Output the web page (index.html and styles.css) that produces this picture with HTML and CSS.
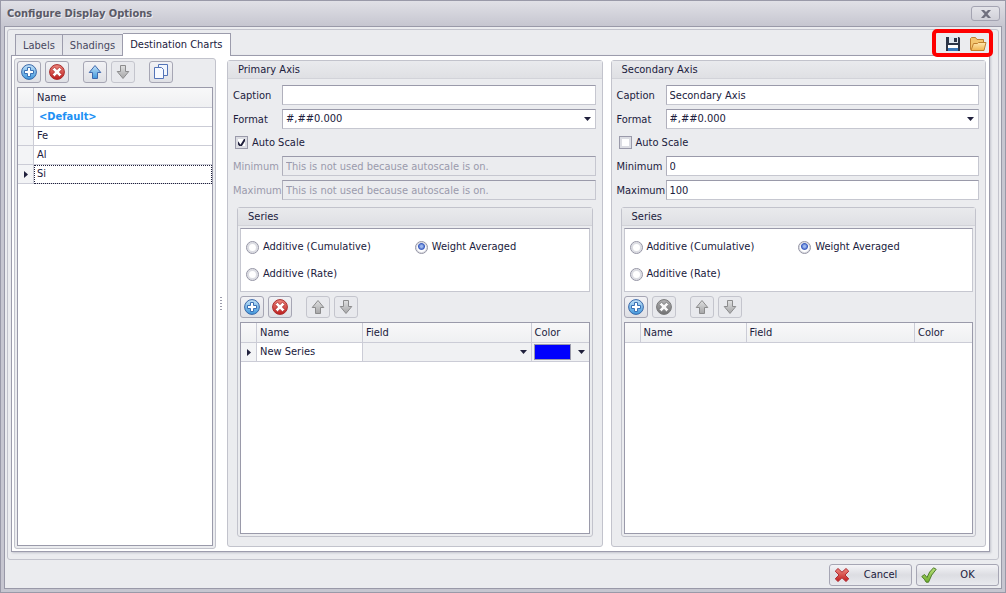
FILE: index.html
```
<!DOCTYPE html>
<html lang="en">
<head>
  <meta charset="UTF-8">
  <title>Configure Display Options</title>
  <link rel="stylesheet" href="styles.css">
</head>
<body>
  <!-- Shared icons -->
  <svg class="sprite" aria-hidden="true">
    <defs>
      <linearGradient id="blueFill" x1="0" y1="0" x2="0" y2="1">
        <stop offset="0" stop-color="#c4e2f8"/>
        <stop offset="1" stop-color="#3f97dc"/>
      </linearGradient>
      <linearGradient id="redFill" x1="0" y1="0" x2="0" y2="1">
        <stop offset="0" stop-color="#ee8a80"/>
        <stop offset="1" stop-color="#c01c1c"/>
      </linearGradient>
      <linearGradient id="greenFill" x1="0" y1="0" x2="0" y2="1">
        <stop offset="0" stop-color="#b9e07a"/>
        <stop offset="1" stop-color="#6fae2c"/>
      </linearGradient>
      <linearGradient id="folderFill" x1="0" y1="0" x2="0" y2="1">
        <stop offset="0" stop-color="#ffe9b0"/>
        <stop offset="1" stop-color="#f0b450"/>
      </linearGradient>
    </defs>
    <symbol id="iconAdd" viewBox="0 0 16 16">
      <circle cx="8" cy="8" r="7.4" fill="url(#blueFill)" stroke="#3a68a8"/>
      <path d="M6.500 3.500h3v3h3v3h-3v3h-3v-3h-3v-3h3z" fill="#fff" stroke="#3a70b4"/>
    </symbol>
    <symbol id="iconRemove" viewBox="0 0 16 16">
      <circle cx="8" cy="8" r="7.4" fill="url(#redFill)" stroke="#a82c2c"/>
      <path d="M5.500 3.200L8 5.600l2.500-2.400 2.300 2.300L10.400 8l2.400 2.500-2.300 2.300L8 10.400l-2.500 2.400-2.300-2.300L5.600 8 3.200 5.500z" fill="#fff" stroke="#a82424" stroke-width=".8"/>
    </symbol>
    <symbol id="iconUp" viewBox="0 0 16 16">
      <path d="M8 1.500L13.800 8.500H10.500V14.500H5.500V8.500H2.200z" fill="url(#blueFill)" stroke="#3f68ae"/>
    </symbol>
    <symbol id="iconDown" viewBox="0 0 16 16">
      <path d="M8 14.500L2.200 7.500H5.500V1.500H10.500V7.500H13.800z" fill="url(#blueFill)" stroke="#3f68ae"/>
    </symbol>
    <symbol id="iconCopy" viewBox="0 0 16 16">
      <path d="M5.500 .5h9v11h-9z" fill="#f2f6fd" stroke="#5474b8"/>
      <path d="M1.500 3.500h7l2 2v9h-9z" fill="#f8faff" stroke="#5474b8"/>
    </symbol>
    <symbol id="iconSave" viewBox="0 0 16 16">
      <path d="M1 1h13l1 1v13H1z" fill="#2c3547"/>
      <path d="M4 1h9v6H4z" fill="#dfe7ef"/>
      <path d="M9 2h3v4H9z" fill="#2c3547"/>
      <path d="M3 9h10v5H3z" fill="#fff"/>
      <path d="M3 12h10v3H3z" fill="#3a78b8"/>
    </symbol>
    <symbol id="iconOpen" viewBox="0 0 18 16">
      <path d="M1.500 13.500v-11l1-1h4l1.500 2h6.500v10z" fill="#f3c670" stroke="#c08030"/>
      <path d="M4.500 7.500h4l1-1h7.500l-2 8h-13z" fill="url(#folderFill)" stroke="#c08030"/>
    </symbol>
    <symbol id="iconCancel" viewBox="0 0 16 16">
      <path d="M4 1.500L8 5.200l4-3.700 2.800 2.700L11 8l3.800 3.800-2.800 2.700-4-3.700-4 3.700-2.800-2.700L5 8 1.200 4.200z" fill="url(#redFill)" stroke="#b02c34"/>
    </symbol>
    <symbol id="iconOk" viewBox="0 0 16 16">
      <path d="M.8 9.500l2.700-2 2.500 3Q8 4.500 12.500 .8l2.700 1.500Q10 7.500 7.500 15.200H5.200Q3.500 12 .8 9.500z" fill="url(#greenFill)" stroke="#4c7c28"/>
    </symbol>
    <symbol id="iconClose" viewBox="0 0 10 8">
      <path d="M0 0h3l2 2 2-2h3L6.500 4 10 8H7L5 6 3 8H0l3.500-4z" fill="#70707e"/>
    </symbol>
  </svg>

  <div class="window">
    <header class="titleBar">
      <h1>Configure Display Options</h1>
      <button class="closeButton" type="button" aria-label="Close"><svg><use href="#iconClose"/></svg></button>
    </header>

    <form class="content">
      <div class="tabControl">
        <div class="tabBar">
          <div class="tabs" role="tablist">
            <button class="tab" type="button" role="tab">Labels</button>
            <button class="tab" type="button" role="tab">Shadings</button>
            <button class="tab active" type="button" role="tab" aria-selected="true">Destination Charts</button>
          </div>
          <div class="fileTools">
            <button type="button" aria-label="Save"><svg><use href="#iconSave"/></svg></button>
            <button type="button" aria-label="Open"><svg><use href="#iconOpen"/></svg></button>
          </div>
        </div>

        <div class="tabPage">
          <section class="chartList">
            <div class="toolbar">
              <button type="button" aria-label="Add"><svg><use href="#iconAdd"/></svg></button>
              <button type="button" aria-label="Remove"><svg><use href="#iconRemove"/></svg></button>
              <button class="spaced" type="button" aria-label="Move up"><svg><use href="#iconUp"/></svg></button>
              <button type="button" aria-label="Move down" disabled><svg><use href="#iconDown"/></svg></button>
              <button class="spaced" type="button" aria-label="Copy"><svg><use href="#iconCopy"/></svg></button>
            </div>
            <div class="gridBox">
              <table>
                <thead>
                  <tr><th class="marker"></th><th>Name</th></tr>
                </thead>
                <tbody>
                  <tr><td class="marker"></td><td class="default">&lt;Default&gt;</td></tr>
                  <tr><td class="marker"></td><td>Fe</td></tr>
                  <tr><td class="marker"></td><td>Al</td></tr>
                  <tr><td class="marker current"></td><td class="focused">Si</td></tr>
                </tbody>
              </table>
            </div>
          </section>

          <div class="splitter"></div>

          <div class="axes">
            <section class="group">
              <h2>Primary Axis</h2>
              <div class="axisBody">
                <div class="field">
                  <label for="primaryCaption">Caption</label>
                  <input type="text" id="primaryCaption">
                </div>
                <div class="field">
                  <label for="primaryFormat">Format</label>
                  <select id="primaryFormat"><option>#,##0.000</option></select>
                </div>
                <label class="check"><input type="checkbox" checked> Auto Scale</label>
                <div class="field disabled">
                  <label for="primaryMin">Minimum</label>
                  <input type="text" id="primaryMin" value="This is not used because autoscale is on." disabled>
                </div>
                <div class="field disabled">
                  <label for="primaryMax">Maximum</label>
                  <input type="text" id="primaryMax" value="This is not used because autoscale is on." disabled>
                </div>

                <section class="group series">
                  <h2>Series</h2>
                  <div class="seriesBody">
                    <div class="radios">
                      <label><input type="radio" name="primaryMode"> Additive (Cumulative)</label>
                      <label><input type="radio" name="primaryMode" checked> Weight Averaged</label>
                      <label><input type="radio" name="primaryMode"> Additive (Rate)</label>
                    </div>
                    <div class="toolbar">
                      <button type="button" aria-label="Add series"><svg><use href="#iconAdd"/></svg></button>
                      <button type="button" aria-label="Remove series"><svg><use href="#iconRemove"/></svg></button>
                      <button class="spaced" type="button" aria-label="Move series up" disabled><svg><use href="#iconUp"/></svg></button>
                      <button type="button" aria-label="Move series down" disabled><svg><use href="#iconDown"/></svg></button>
                    </div>
                    <div class="gridBox">
                      <table>
                        <thead>
                          <tr><th class="marker"></th><th class="nameCol">Name</th><th>Field</th><th class="colorCol">Color</th></tr>
                        </thead>
                        <tbody>
                          <tr>
                            <td class="marker current"></td>
                            <td>New Series</td>
                            <td class="editor"><select aria-label="Field"><option></option></select></td>
                            <td class="editor"><button class="colorPicker" type="button" aria-label="Color"><span class="swatch"></span></button></td>
                          </tr>
                        </tbody>
                      </table>
                    </div>
                  </div>
                </section>
              </div>
            </section>

            <section class="group">
              <h2>Secondary Axis</h2>
              <div class="axisBody">
                <div class="field">
                  <label for="secondaryCaption">Caption</label>
                  <input type="text" id="secondaryCaption" value="Secondary Axis">
                </div>
                <div class="field">
                  <label for="secondaryFormat">Format</label>
                  <select id="secondaryFormat"><option>#,##0.000</option></select>
                </div>
                <label class="check"><input type="checkbox"> Auto Scale</label>
                <div class="field">
                  <label for="secondaryMin">Minimum</label>
                  <input type="text" id="secondaryMin" value="0">
                </div>
                <div class="field">
                  <label for="secondaryMax">Maximum</label>
                  <input type="text" id="secondaryMax" value="100">
                </div>

                <section class="group series">
                  <h2>Series</h2>
                  <div class="seriesBody">
                    <div class="radios">
                      <label><input type="radio" name="secondaryMode"> Additive (Cumulative)</label>
                      <label><input type="radio" name="secondaryMode" checked> Weight Averaged</label>
                      <label><input type="radio" name="secondaryMode"> Additive (Rate)</label>
                    </div>
                    <div class="toolbar">
                      <button type="button" aria-label="Add series"><svg><use href="#iconAdd"/></svg></button>
                      <button type="button" aria-label="Remove series" disabled><svg><use href="#iconRemove"/></svg></button>
                      <button class="spaced" type="button" aria-label="Move series up" disabled><svg><use href="#iconUp"/></svg></button>
                      <button type="button" aria-label="Move series down" disabled><svg><use href="#iconDown"/></svg></button>
                    </div>
                    <div class="gridBox">
                      <table>
                        <thead>
                          <tr><th class="marker"></th><th class="nameCol">Name</th><th>Field</th><th class="colorCol">Color</th></tr>
                        </thead>
                      </table>
                    </div>
                  </div>
                </section>
              </div>
            </section>
          </div>
        </div>
      </div>

      <footer class="actions">
        <button type="button"><svg><use href="#iconCancel"/></svg><span>Cancel</span></button>
        <button type="submit"><svg><use href="#iconOk"/></svg><span>OK</span></button>
      </footer>
    </form>
  </div>
</body>
</html>
```
FILE: styles.css
```
* {
  box-sizing: border-box;
}

body {
  margin: 0;
  color: #20203c;
  font-family: Tahoma, "DejaVu Sans Condensed", sans-serif;
  font-size: 11px;
  line-height: 14px;
}

button,
input,
select {
  margin: 0;
  color: inherit;
  font: inherit;
}

h1,
h2 {
  margin: 0;
  font-size: 11px;
}

svg {
  display: block;
  width: 16px;
  height: 16px;
}

.sprite {
  position: absolute;
  width: 0;
  height: 0;
}

/* Window frame */

.window {
  display: flex;
  flex-direction: column;
  min-height: 100vh;
  padding: 0 3px 3px;
  border: 1px solid #9999a8;
  background-color: #c6c6d0;
}

.titleBar {
  display: flex;
  align-items: center;
  justify-content: space-between;
  height: 25px;
  margin: 0 -3px;
  padding: 0 5px 0 6px;
  background: linear-gradient(#e0e0e6, #c6c6d0);
}

.titleBar h1 {
  color: #5a5a66;
  text-shadow: 1px 1px 0 #eeeef2;
}

.closeButton {
  display: flex;
  align-items: center;
  justify-content: center;
  width: 29px;
  height: 15px;
  padding: 0;
  border: 1px solid #a4a4b2;
  border-radius: 3px;
  background: linear-gradient(#e4e4e9, #d0d0d8);
}

.closeButton svg {
  width: 10px;
  height: 8px;
}

.content {
  display: flex;
  flex: 1;
  flex-direction: column;
  padding: 2px;
  border: 1px solid #9999a8;
  background-color: #ebecef;
}

/* Tabs */

.tabControl {
  display: flex;
  flex: 1;
  flex-direction: column;
  padding: 0 8px 7px 3px;
  border: 1px solid #c2c3cc;
  border-radius: 3px;
}

.tabBar {
  display: flex;
  align-items: flex-end;
  justify-content: space-between;
  padding: 3px 3px 0 4px;
}

.tabs {
  display: flex;
  align-items: flex-end;
}

.tab {
  height: 21px;
  padding: 2px 7px 0;
  border: 1px solid #9c9cac;
  border-bottom: none;
  background: linear-gradient(#e2e3e8, #e9eaee);
  color: #484860;
}

.tab + .tab {
  border-left-width: 0;
}

.tab.active {
  z-index: 1;
  height: 23px;
  margin-bottom: -1px;
  padding: 0 7px;
  background: #fff;
  color: #20203c;
}

.fileTools {
  position: relative;
  display: flex;
  gap: 8px;
  padding-bottom: 3px;
}

.fileTools::after {
  content: "";
  position: absolute;
  inset: -7px -6px -2px -13px;
  border: 4px solid #fe0000;
  border-radius: 5px;
  pointer-events: none;
}

.fileTools button {
  padding: 0;
  border: none;
  background: none;
}

.fileTools button:last-child svg {
  width: 18px;
}

.tabPage {
  display: flex;
  flex: 1;
  padding: 2px 3px 2px 2px;
  border: 1px solid #9c9cac;
  background-color: #fff;
  box-shadow: 1px 1px 2px #c2c3cc;
}

/* Chart list */

.chartList {
  display: flex;
  flex-direction: column;
  width: 202px;
  padding: 2px;
  border: 1px solid #c2c3cc;
  border-radius: 3px;
  background-color: #ebecef;
}

.toolbar {
  display: flex;
  gap: 4px;
  padding-bottom: 4px;
}

.toolbar button {
  display: flex;
  align-items: center;
  justify-content: center;
  width: 24px;
  height: 22px;
  padding: 0;
  border: 1px solid #a6a6b4;
  border-radius: 3px;
  background: linear-gradient(#f2f2f5, #dfe0e5);
}

.toolbar .spaced {
  margin-left: 10px;
}

.toolbar button:disabled {
  border-color: #c4c5cd;
  background: #e8e9ed;
}

.toolbar button:disabled svg {
  opacity: 0.7;
  filter: grayscale(1);
}

.gridBox {
  flex: 1;
  border: 1px solid #9a9aaa;
  background-color: #fff;
}

table {
  width: 100%;
  border-collapse: separate;
  border-spacing: 0;
  table-layout: fixed;
}

th,
td {
  height: 19px;
  padding: 0 3px;
  border-right: 1px solid #cbccd6;
  border-bottom: 1px solid #cbccd6;
  text-align: left;
}

th {
  height: 20px;
  background: linear-gradient(#f8f8f9, #eff0f2);
  font-weight: normal;
}

th:last-child,
td:last-child {
  border-right: none;
}

.marker {
  width: 16px;
  background-color: #f3f4f6;
}

.current {
  background: #f3f4f6 url("data:image/svg+xml,%3Csvg xmlns='http://www.w3.org/2000/svg' width='4' height='7'%3E%3Cpath d='M0 0l4 3.500L0 7z' fill='%2320203c'/%3E%3C/svg%3E") no-repeat 6px center;
}

.default {
  padding-left: 5px;
  color: #2090f4;
  font-weight: bold;
}

.focused {
  outline: 1px dotted #20203c;
  outline-offset: -1px;
}

.nameCol {
  width: 106px;
}

.colorCol {
  width: 57px;
}

.splitter {
  width: 11px;
  background: repeating-linear-gradient(#9c9cac 0 1px, transparent 1px 3px) 4px center / 2px 14px no-repeat;
}

/* Axis groups */

.axes {
  display: flex;
  flex: 1;
  gap: 8px;
  padding: 2px 0;
}

.group {
  display: flex;
  flex: 1;
  flex-direction: column;
  min-width: 0;
  border: 1px solid #c2c3cc;
  border-radius: 3px;
  background-color: #ebecef;
}

.group h2 {
  height: 18px;
  padding: 2px 10px 0;
  border-bottom: 1px solid #d2d3d9;
  background: linear-gradient(#e9eaed, #dfe0e4);
  font-weight: normal;
}

.axisBody {
  display: flex;
  flex: 1;
  flex-direction: column;
  gap: 4px;
  padding: 6px 6px 9px 5px;
}

.field {
  display: flex;
  align-items: center;
}

.field label {
  width: 49px;
  padding-top: 2px;
}

.field input,
.field select {
  flex: 1;
  min-width: 0;
  height: 20px;
  padding: 0 3px;
  border: 1px solid #c6c7d0;
  border-top-color: #9a9aaa;
  border-left-color: #b0b0bc;
  border-radius: 0;
  background-color: #fff;
}

select,
.colorPicker {
  appearance: none;
  background-image: url("data:image/svg+xml,%3Csvg xmlns='http://www.w3.org/2000/svg' width='7' height='4'%3E%3Cpath d='M0 0h7L3.500 4z' fill='%2320203c'/%3E%3C/svg%3E");
  background-position: right 4px center;
  background-repeat: no-repeat;
}

.field.disabled,
.field.disabled input {
  background-color: #ebecef;
  color: #9a9aac;
}

.check {
  display: flex;
  align-items: center;
  gap: 4px;
  height: 19px;
  padding-left: 2px;
}

.check input {
  appearance: none;
  width: 13px;
  height: 13px;
  border: 1px solid #9a9aaa;
  background-color: #fff;
  box-shadow: inset 0 0 0 2px #dcdde3;
}

.check input:checked {
  background: url("data:image/svg+xml,%3Csvg xmlns='http://www.w3.org/2000/svg' width='13' height='13'%3E%3Cpath d='M2.500 6L5.500 10.500L12 0' fill='none' stroke='%2320203c' stroke-width='2'/%3E%3C/svg%3E") no-repeat border-box #fff;
}

.series {
  margin: 3px 3px 0 4px;
}

.seriesBody {
  display: flex;
  flex: 1;
  flex-direction: column;
  padding: 2px;
}

.radios {
  display: grid;
  grid-template-columns: 1fr 1fr;
  gap: 13px 0;
  margin-bottom: 4px;
  padding: 11px 5px 10px;
  border: 1px solid #c6c7d0;
  border-top-color: #9a9aaa;
  background-color: #fff;
}

.radios label {
  display: flex;
  align-items: center;
  gap: 4px;
}

.radios input {
  appearance: none;
  width: 13px;
  height: 13px;
  border: 1px solid #9494a4;
  border-radius: 50%;
  background-color: #fff;
  box-shadow: inset 0 0 0 2px #dcdde3;
}

.radios input:checked {
  background: radial-gradient(circle at 50% 40%, #9cb8ee 0 1px, #3a5cc0 3px, #fff 4px);
  box-shadow: inset 0 0 0 1px #dcdde3;
}

.editor {
  padding: 0;
  background-color: #f0f1f3;
}

.editor select,
.colorPicker {
  display: block;
  width: 100%;
  height: 18px;
  border: none;
  background-color: transparent;
}

.colorPicker {
  padding: 1px 2px;
}

.swatch {
  display: block;
  width: 37px;
  height: 16px;
  border: 1px solid #9a9aaa;
  background-color: #0000fe;
}

/* Dialog buttons */

.actions {
  display: flex;
  justify-content: flex-end;
  gap: 4px;
  padding-top: 4px;
}

.actions button {
  display: flex;
  align-items: center;
  width: 83px;
  height: 22px;
  padding: 0 4px;
  border: 1px solid #a6a6b4;
  border-radius: 3px;
  background: linear-gradient(#f4f4f7, #dcdde2 50%, #e9eaee);
}

.actions span {
  flex: 1;
  padding-left: 4px;
}
```
